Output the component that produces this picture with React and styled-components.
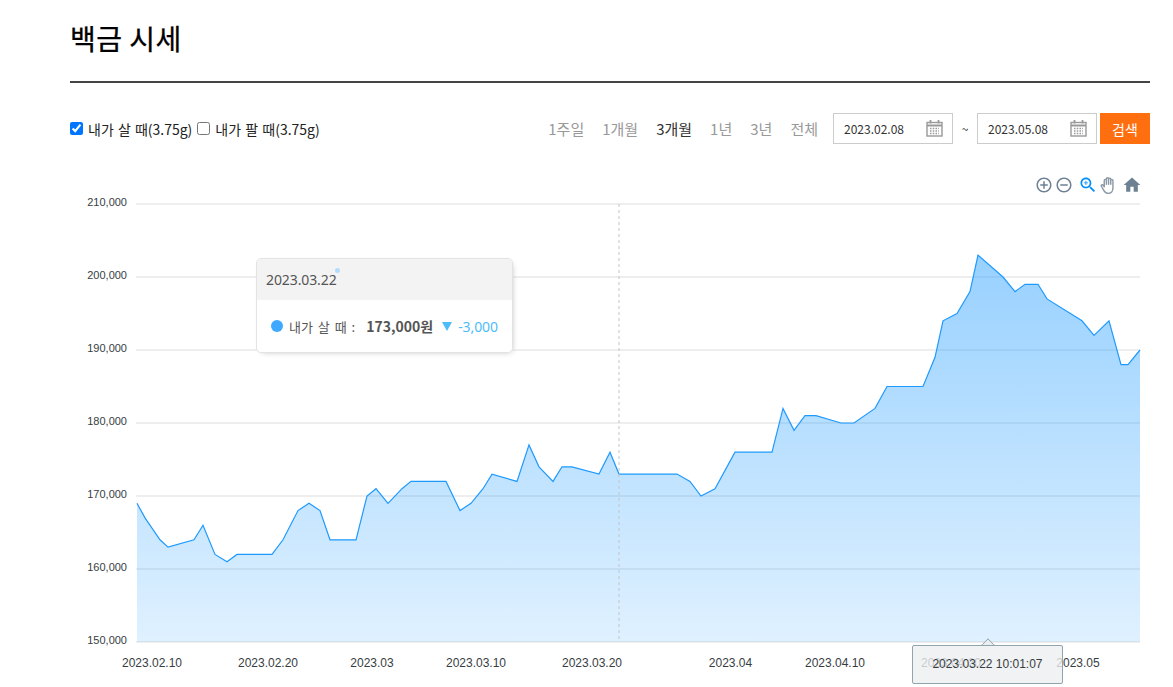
import React from "react";
import styled, { createGlobalStyle } from "styled-components";

const GlobalStyle = createGlobalStyle`
  html, body {
    margin: 0;
    padding: 0;
    background: #fff;
    overflow: hidden;
    font-family: "Noto Sans CJK KR", "Noto Sans", sans-serif;
  }
`;

const Page = styled.div`
  width: 1080px;
  height: 687px;
  margin-left: 70px;
  overflow: hidden;
`;
const Heading = styled.h2`
  margin: 0;
  height: 81px;
  box-sizing: content-box;
  border-bottom: 2px solid #444;
  font-size: 28px;
  font-weight: 400;
  letter-spacing: 0.5px;
  line-height: 76px;
  color: #000;
  -webkit-text-stroke: 0.3px #000;
`;
const FilterRow = styled.div`
  display: flex;
  align-items: center;
  justify-content: space-between;
  height: 31px;
  margin-top: 30px;
`;
const Checks = styled.div`
  display: flex;
  align-items: center;
  gap: 5px;
`;
const CheckLabel = styled.label`
  display: flex;
  align-items: center;
  gap: 5px;
  font-size: 14px;
  word-spacing: 1px;
  color: #222;
  input {
    margin: 0;
    width: 13px;
    height: 13px;
  }
`;
const Controls = styled.div`
  display: flex;
  align-items: center;
`;
const Periods = styled.div`
  display: flex;
  gap: 18px;
  margin-right: 15px;
`;
const Period = styled.span`
  font-size: 15px;
  color: ${(p) => (p.$active ? "#333" : "#999")};
`;
const DateBox = styled.div`
  display: flex;
  align-items: center;
  justify-content: space-between;
  box-sizing: border-box;
  width: 120px;
  height: 31px;
  padding: 0 9px 0 10px;
  border: 1px solid #ccc;
  font-size: 12px;
  color: #333;
`;
const Tilde = styled.span`
  width: 24px;
  text-align: center;
  font-size: 12px;
  color: #333;
`;
const SearchButton = styled.button`
  width: 50px;
  height: 31px;
  margin-left: 3px;
  padding: 0;
  border: none;
  background: #ff6f0f;
  color: #fff;
  font-family: inherit;
  font-size: 14px;
`;
const ChartArea = styled.div`
  position: relative;
  margin-top: 26px;
  width: 1080px;
  height: 517px;
`;
const ChartSvg = styled.svg`
  display: block;
`;
const AxisText = styled.text`
  font-family: "Liberation Sans", Arial, sans-serif;
  fill: #373d3f;
`;
const Toolbar = styled.div`
  position: absolute;
  top: 5px;
  right: 8px;
  display: flex;
  align-items: center;
`;
const ToolIcon = styled.svg`
  display: block;
  width: ${(p) => p.$size || 20}px;
  height: ${(p) => p.$size || 20}px;
  margin-left: ${(p) => p.$gap || 0}px;
  fill: ${(p) => p.$color || "#6e8192"};
`;
const HandIcon = styled.svg`
  display: block;
  width: 20px;
  height: 20px;
  fill: none;
  stroke: #8a98a5;
  stroke-width: 1.7;
  stroke-linecap: round;
  stroke-linejoin: round;
`;
const HoverCard = styled.div`
  position: absolute;
  left: 186px;
  top: 88px;
  width: 257px;
  box-sizing: border-box;
  border: 1px solid #e3e3e3;
  border-radius: 5px;
  background: rgba(255, 255, 255, 0.96);
  box-shadow: 2px 2px 6px -4px #999;
  overflow: hidden;
`;
const CardTitle = styled.div`
  height: 41px;
  padding-left: 9px;
  background: #f3f3f3;
  font-family: "Noto Sans", sans-serif;
  font-size: 14px;
  letter-spacing: -0.1px;
  line-height: 41px;
  color: #555;
`;
const CardBody = styled.div`
  display: flex;
  align-items: center;
  height: 52px;
  padding-left: 14px;
  color: #555;
`;
const SeriesDot = styled.span`
  width: 12px;
  height: 12px;
  margin-right: 6px;
  border-radius: 50%;
  background: #3fa9ff;
`;
const SeriesName = styled.span`
  margin-right: 11px;
  font-size: 13px;
  word-spacing: 2px;
`;
const SeriesValue = styled.strong`
  margin-right: 9px;
  font-size: 14px;
  font-weight: 700;
`;
const DownArrow = styled.span`
  width: 0;
  height: 0;
  margin-right: 6px;
  border-left: 5px solid transparent;
  border-right: 5px solid transparent;
  border-top: 9px solid #4dbdf9;
`;
const Change = styled.span`
  font-family: "Noto Sans", sans-serif;
  font-size: 14px;
  letter-spacing: -0.1px;
  color: #4dbdf9;
`;
const FadingMarker = styled.span`
  position: absolute;
  left: 265px;
  top: 98px;
  width: 5px;
  height: 5px;
  border-radius: 50%;
  background: #b5dcfb;
`;
const XTip = styled.div`
  position: absolute;
  left: 842px;
  top: 475px;
  box-sizing: border-box;
  width: 151px;
  height: 39px;
  border: 1px solid #90a4ae;
  border-radius: 2px;
  background: rgba(236, 239, 241, 0.8);
  font-family: "Liberation Sans", Arial, sans-serif;
  font-size: 12px;
  line-height: 37px;
  text-align: center;
  color: #373d3f;
  &::before {
    content: "";
    position: absolute;
    left: 70px;
    top: -6px;
    width: 9px;
    height: 9px;
    background: #eceff1;
    border-left: 1px solid #90a4ae;
    border-top: 1px solid #90a4ae;
    transform: rotate(45deg);
    clip-path: polygon(0 0, 100% 0, 0 100%);
  }
`;

const points = [
  [137, 169], [145, 167], [160, 164], [168, 163], [194, 164], [203, 166], [215, 162],
  [227, 161], [237, 162], [272, 162], [283, 164], [298, 168], [309, 169], [320, 168],
  [330, 164], [356, 164], [367, 170], [376, 171], [388, 169], [402, 171], [411, 172],
  [446, 172], [460, 168], [471, 169], [483, 171], [492, 173], [517, 172], [529, 177],
  [539, 174], [553, 172], [562, 174], [572, 174], [599, 173], [610, 176], [619, 173],
  [677, 173], [690, 172], [701, 170], [715, 171], [735, 176], [772, 176], [783, 182],
  [794, 179], [805, 181], [816, 181], [841, 180], [854, 180], [875, 182], [887, 185],
  [923, 185], [935, 189], [943, 194], [957, 195], [970, 198], [978, 203], [1003, 200],
  [1015, 198], [1025, 199], [1038, 199], [1047, 197], [1082, 194], [1094, 192],
  [1109, 194], [1121, 188], [1128, 188], [1140, 190],
];
const yOf = (v) => 642 - (v - 150) * 7.3;
const line = points.map(([x, v]) => `${x},${yOf(v)}`).join(" ");
const area = `137,642 ${line} 1140,642`;

const yTicks = [210, 200, 190, 180, 170, 160, 150];
const xTicks = [
  ["2023.02.10", 152], ["2023.02.20", 268], ["2023.03", 372], ["2023.03.10", 476],
  ["2023.03.20", 592], ["2023.04", 730.5], ["2023.04.10", 835], ["2023.04.20", 951],
  ["2023.05", 1078],
];

const CalendarIcon = () => (
  <svg width="17" height="17" viewBox="0 0 17 17" fill="none" stroke="#999">
    <rect x="1" y="2.5" width="15" height="13.500" strokeWidth="1.400" />
    <path d="M1 5.500h15M4.500 0v3.500M12.500 0v3.500" strokeWidth="1.800" />
    <path d="M4 8.500h9M4 11h9M4 13.500h9" strokeWidth="1.300" strokeDasharray="1.500 1.250" />
  </svg>
);

const DateField = ({ value }) => (
  <DateBox>
    <span>{value}</span>
    <CalendarIcon />
  </DateBox>
);

const App = () => {
  return (
    <Page>
      <GlobalStyle />
      <Heading>백금 시세</Heading>
      <FilterRow>
        <Checks>
          <CheckLabel>
            <input type="checkbox" defaultChecked />내가 살 때(3.75g)
          </CheckLabel>
          <CheckLabel>
            <input type="checkbox" />내가 팔 때(3.75g)
          </CheckLabel>
        </Checks>
        <Controls>
          <Periods>
            <Period>1주일</Period>
            <Period>1개월</Period>
            <Period $active>3개월</Period>
            <Period>1년</Period>
            <Period>3년</Period>
            <Period>전체</Period>
          </Periods>
          <DateField value="2023.02.08" />
          <Tilde>~</Tilde>
          <DateField value="2023.05.08" />
          <SearchButton>검색</SearchButton>
        </Controls>
      </FilterRow>
      <ChartArea>
        <ChartSvg width="1080" height="517" viewBox="70 170 1080 517">
          <defs>
            <linearGradient id="areaFill" x1="0" y1="0" x2="0" y2="1">
              <stop offset="0" stopColor="#1e9aff" stopOpacity="0.46" />
              <stop offset="1" stopColor="#1e9aff" stopOpacity="0.14" />
            </linearGradient>
          </defs>
          {yTicks.map((t) => (
            <line key={t} x1="136" x2="1140" y1={yOf(t)} y2={yOf(t)} stroke="#e9e9e9" strokeWidth="1.5" />
          ))}
          <polygon points={area} fill="url(#areaFill)" />
          <polyline points={line} fill="none" stroke="#1e9aff" strokeWidth="1.2" />
          <line x1="619" x2="619" y1="204" y2="641" stroke="#c4c4c4" strokeDasharray="3 3" />
          {yTicks.map((t) => (
            <AxisText key={t} x="127" y={yOf(t) + 2} textAnchor="end" fontSize="11">
              {t},000
            </AxisText>
          ))}
          {xTicks.map(([label, x]) => (
            <AxisText key={label} x={x} y="667" textAnchor="middle" fontSize="12">
              {label}
            </AxisText>
          ))}
        </ChartSvg>
        <Toolbar>
          <ToolIcon viewBox="0 0 24 24" $size={18}>
            <path d="M13 7h-2v4H7v2h4v4h2v-4h4v-2h-4V7zm-1-5C6.48 2 2 6.48 2 12s4.48 10 10 10 10-4.48 10-10S17.52 2 12 2zm0 18c-4.41 0-8-3.59-8-8s3.59-8 8-8 8 3.59 8 8-3.59 8-8 8z" />
          </ToolIcon>
          <ToolIcon viewBox="0 0 24 24" $size={18} $gap={2}>
            <path d="M7 11v2h10v-2H7zm5-9C6.48 2 2 6.48 2 12s4.48 10 10 10 10-4.48 10-10S17.52 2 12 2zm0 18c-4.41 0-8-3.59-8-8s3.59-8 8-8 8 3.59 8 8-3.59 8-8 8z" />
          </ToolIcon>
          <ToolIcon viewBox="0 0 24 24" $color="#008ffb" $gap={5}>
            <path d="M15.5 14h-.79l-.28-.27C15.41 12.59 16 11.11 16 9.5 16 5.91 13.09 3 9.5 3S3 5.91 3 9.5 5.91 16 9.5 16c1.61 0 3.09-.59 4.23-1.57l.27.28v.79l5 4.99L20.49 19l-4.99-5zm-6 0C7.01 14 5 11.99 5 9.5S7.01 5 9.5 5 14 7.01 14 9.5 11.99 14 9.5 14z" />
            <path d="M12 10h-2v2H9v-2H7V9h2V7h1v2h2v1z" />
          </ToolIcon>
          <HandIcon viewBox="0 0 24 24">
            <path d="M7.500 13.500V6.500a1.300 1.300 0 0 1 2.600 0V11M10.100 11V4.500a1.300 1.300 0 0 1 2.600 0V11M12.700 11V5a1.300 1.300 0 0 1 2.600 0V11M15.300 11V6.500a1.300 1.300 0 0 1 2.600 0V16c0 3.500-2.300 6-5.500 6-2.800 0-4.200-1.300-5.500-3.600L4 13.500c-.7-1.300 1.300-2.400 2.200-1.100l1.300 1.800" />
          </HandIcon>
          <ToolIcon viewBox="0 0 24 24" $gap={4}>
            <path d="M10 20v-6h4v6h5v-8h3L12 3 2 12h3v8z" />
          </ToolIcon>
        </Toolbar>
        <HoverCard>
          <CardTitle>2023.03.22</CardTitle>
          <CardBody>
            <SeriesDot />
            <SeriesName>내가 살 때 :</SeriesName>
            <SeriesValue>173,000원</SeriesValue>
            <DownArrow />
            <Change>-3,000</Change>
          </CardBody>
        </HoverCard>
        <FadingMarker />
        <XTip>2023.03.22 10:01:07</XTip>
      </ChartArea>
    </Page>
  );
};

export default App;
